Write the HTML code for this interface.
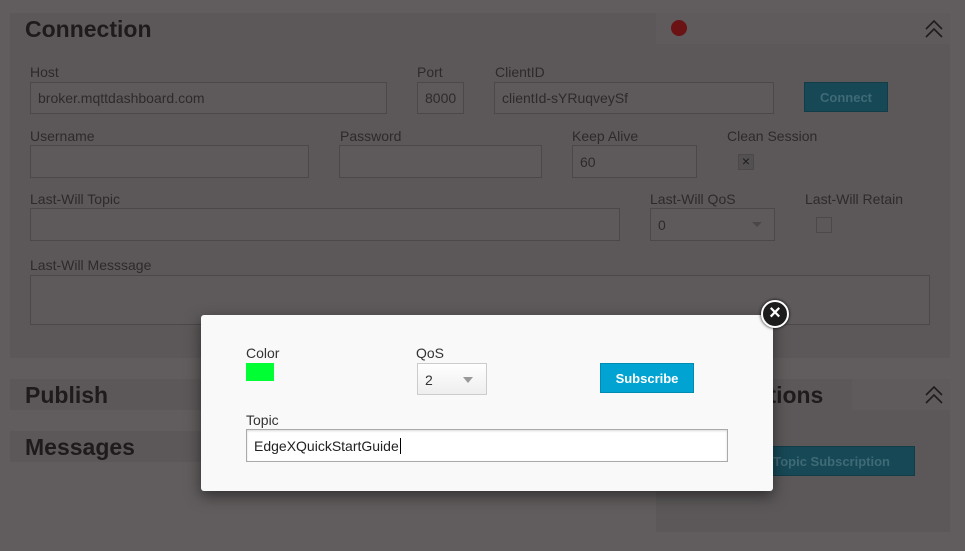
<!DOCTYPE html>
<html><head><meta charset="utf-8"><style>
*{box-sizing:border-box;margin:0;padding:0}
body{width:965px;height:551px;background:#615d5e;font-family:"Liberation Sans",sans-serif;position:relative;overflow:hidden;color:#2a2627}
.abs{position:absolute}
.panel{position:absolute;background:#5c5859}
.h{position:absolute;font-weight:bold;font-size:23px;color:#1f1b1c}
.lbl{position:absolute;font-size:14px;color:#2e2a2b}
.inp{position:absolute;border:1px solid #4c4849;background:#5e5a5b;font-size:14px;color:#2e2a2b;padding-left:7px;display:flex;align-items:center}
.m{font-family:"Liberation Sans Narrow","Liberation Sans",sans-serif}
</style></head><body>
<div class="panel" style="left:10px;top:13px;width:940px;height:345px"></div>
<div class="abs" style="left:656px;top:13px;width:294px;height:31px;background:#5f5b5c"></div>
<div class="h" style="left:25px;top:16px">Connection</div>
<div class="abs" style="left:671px;top:20px;width:16px;height:16px;border-radius:50%;background:#6a1214"></div>
<svg class="abs" style="left:924px;top:19px" width="20" height="20"><path d="M2 10 L10 2 L18 10 M2 18 L10 10 L18 18" stroke="#1f1b1c" stroke-width="1.6" fill="none"/></svg>
<div class="lbl" style="left:30px;top:64px">Host</div>
<div class="inp" style="left:30px;top:82px;width:357px;height:32px">broker.mqttdashboard.com</div>
<div class="lbl" style="left:417px;top:64px">Port</div>
<div class="inp" style="left:417px;top:82px;width:47px;height:32px">8000</div>
<div class="lbl" style="left:495px;top:64px">ClientID</div>
<div class="inp" style="left:494px;top:82px;width:280px;height:32px">clientId-sYRuqveySf</div>
<div class="abs" style="left:804px;top:82px;width:84px;height:30px;background:#174856;border:1px solid #123c48;color:#3f6a76;font-weight:bold;font-size:13px;display:flex;align-items:center;justify-content:center">Connect</div>
<div class="lbl" style="left:30px;top:128px">Username</div>
<div class="inp" style="left:30px;top:145px;width:279px;height:33px"></div>
<div class="lbl" style="left:340px;top:128px">Password</div>
<div class="inp" style="left:339px;top:145px;width:203px;height:33px"></div>
<div class="lbl" style="left:572px;top:128px">Keep Alive</div>
<div class="inp" style="left:572px;top:145px;width:125px;height:33px">60</div>
<div class="lbl" style="left:727px;top:128px">Clean Session</div>
<div class="abs" style="left:738px;top:154px;width:16px;height:16px;background:#535051;border:1px solid #4c4849;font-size:14px;line-height:13px;text-align:center;color:#1f1b1c">×</div>
<div class="lbl" style="left:30px;top:191px">Last-Will Topic</div>
<div class="inp" style="left:30px;top:208px;width:590px;height:33px"></div>
<div class="lbl" style="left:650px;top:191px">Last-Will QoS</div>
<div class="inp" style="left:650px;top:208px;width:125px;height:33px">0</div>
<div class="abs" style="left:752px;top:222px;border-left:5px solid transparent;border-right:5px solid transparent;border-top:5px solid #4a4647"></div>
<div class="lbl" style="left:805px;top:191px">Last-Will Retain</div>
<div class="abs" style="left:816px;top:217px;width:16px;height:16px;border:1px solid #4c4849"></div>
<div class="lbl" style="left:30px;top:257px">Last-Will Messsage</div>
<div class="inp" style="left:30px;top:275px;width:900px;height:50px"></div>
<div class="panel" style="left:10px;top:379px;width:640px;height:31px"></div>
<div class="h" style="left:25px;top:382px">Publish</div>
<div class="panel" style="left:10px;top:431px;width:640px;height:31px"></div>
<div class="h" style="left:25px;top:434px">Messages</div>
<div class="panel" style="left:656px;top:379px;width:294px;height:153px"></div>
<div class="abs" style="left:852px;top:379px;width:98px;height:31px;background:#5f5b5c"></div>
<div class="h" style="left:670px;top:382px">Subscriptions</div>
<svg class="abs" style="left:924px;top:385px" width="20" height="20"><path d="M2 10 L10 2 L18 10 M2 18 L10 10 L18 18" stroke="#1f1b1c" stroke-width="1.6" fill="none"/></svg>
<div class="abs m" style="left:760px;top:446px;width:155px;height:30px;background:#174856;border:1px solid #123c48;color:#3f6a76;font-weight:bold;font-size:13px;display:flex;align-items:center;justify-content:flex-end;padding-right:24px">Topic Subscription</div>
<div class="abs m" style="left:201px;top:315px;width:572px;height:176px;background:#f9f9f9;border-radius:3px;box-shadow:0 5px 15px rgba(0,0,0,.5)">
<div class="abs" style="left:45px;top:30px;font-size:14px;color:#333">Color</div>
<div class="abs" style="left:45px;top:48px;width:28px;height:18px;background:#00ff33"></div>
<div class="abs" style="left:215px;top:30px;font-size:14px;color:#333">QoS</div>
<div class="abs" style="left:216px;top:48px;width:70px;height:32px;border:1px solid #ccc;background:linear-gradient(#fff,#eee);font-size:14px;color:#333;padding:8px 0 0 7px">2</div>
<div class="abs" style="left:262px;top:62px;border-left:5px solid transparent;border-right:5px solid transparent;border-top:6px solid #999"></div>
<div class="abs" style="left:399px;top:48px;width:94px;height:30px;background:#00a3d1;border:1px solid #008bb2;color:#fff;font-weight:bold;font-size:13px;display:flex;align-items:center;justify-content:center">Subscribe</div>
<div class="abs" style="left:45px;top:97px;font-size:14px;color:#333">Topic</div>
<div class="abs" style="left:45px;top:114px;width:482px;height:33px;border:1px solid #aaa;box-shadow:inset 0 1px 2px rgba(0,0,0,.15);background:#fff;font-size:14px;color:#222;padding:8px 0 0 7px">EdgeXQuickStartGuide<span style="border-left:1px solid #000;margin-left:1px"></span></div>
</div>
<div class="abs" style="left:761px;top:300px;width:28px;height:28px;border-radius:50%;background:#1c1c1c;border:2px solid #fff;box-shadow:0 0 3px #000;color:#fff;font-weight:bold;font-size:20px;line-height:23px;text-align:center">×</div>
</body></html>
